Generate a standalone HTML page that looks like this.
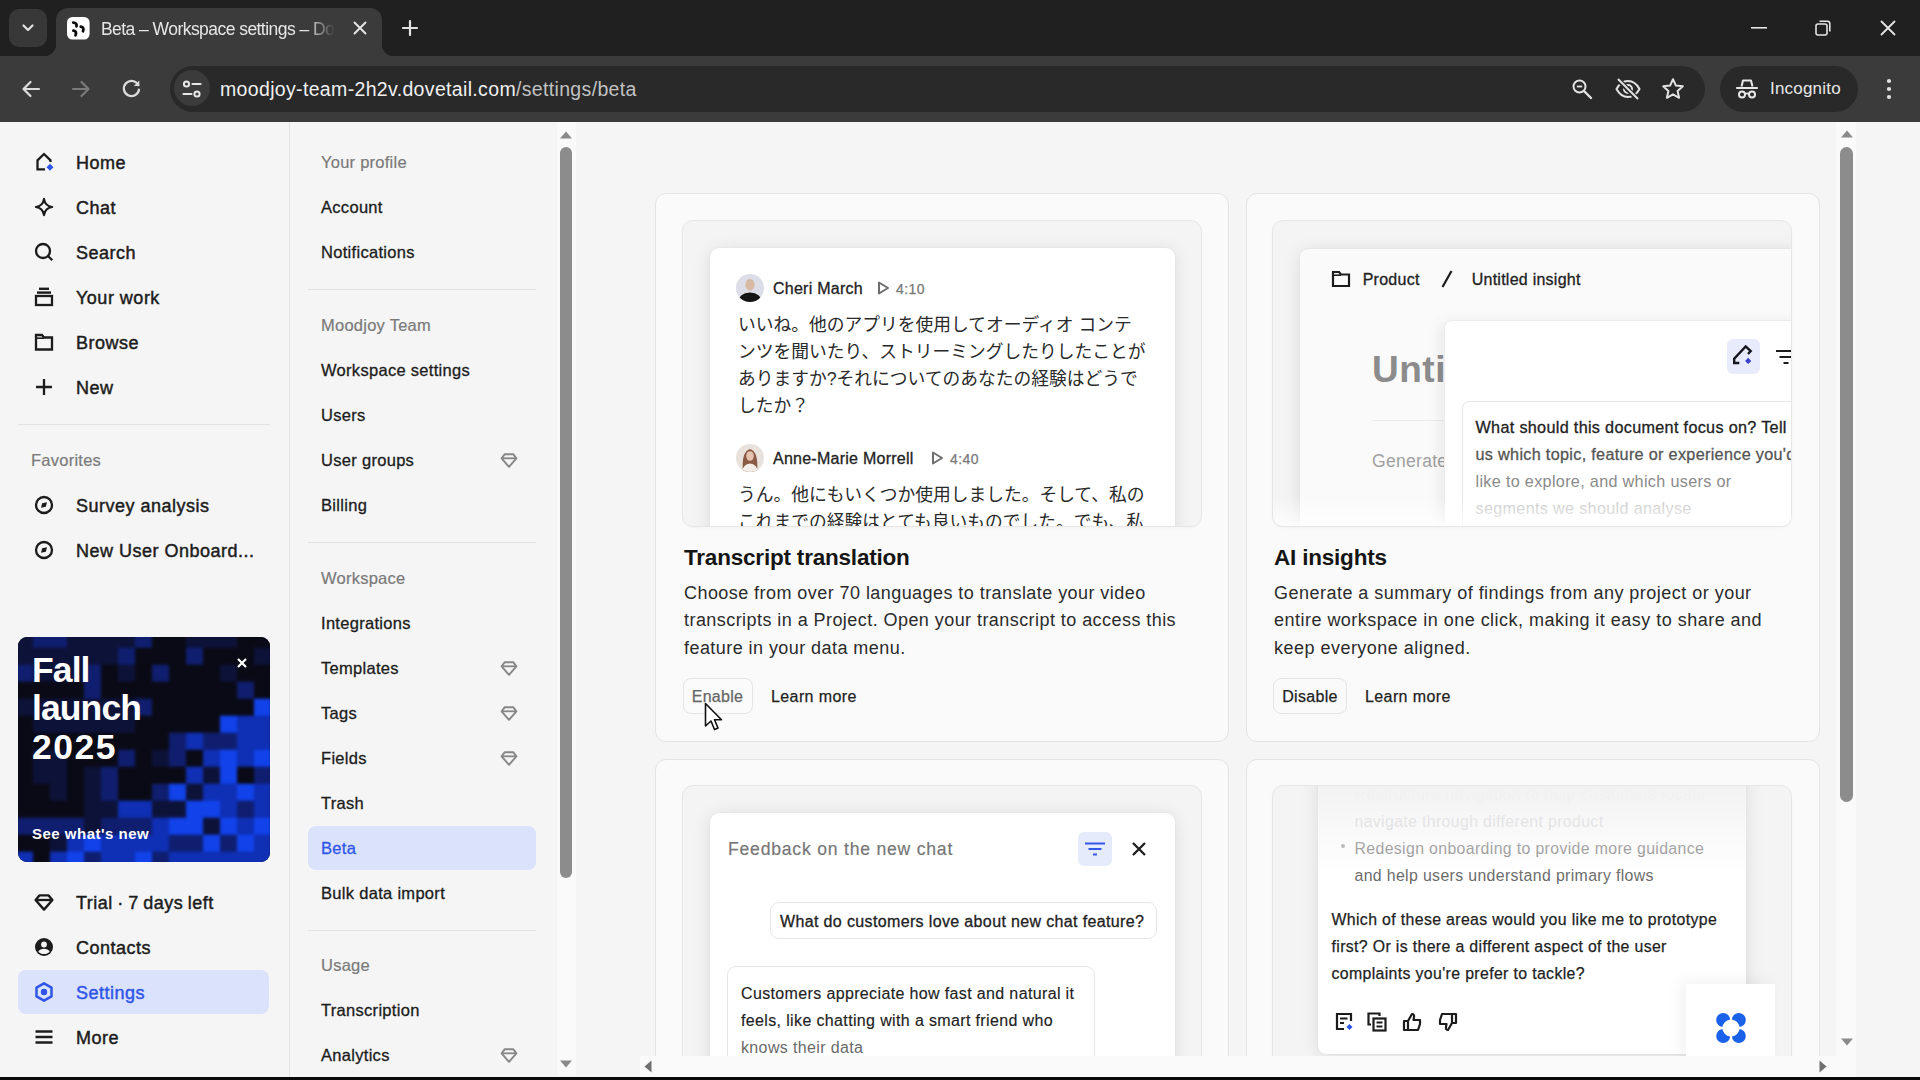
<!DOCTYPE html>
<html lang="en">
<head>
<meta charset="utf-8">
<title>Beta – Workspace settings – Dovetail</title>
<style>
*{box-sizing:border-box;margin:0;padding:0}
html,body{width:1920px;height:1080px;overflow:hidden;background:#f5f5f5}
body{font-family:"Liberation Sans","Noto Sans CJK JP",sans-serif;color:#1f1f1f;position:relative;-webkit-font-smoothing:antialiased}
.abs{position:absolute}
svg{display:block;overflow:visible}
/* ===== browser chrome ===== */
#tabstrip{position:absolute;left:0;top:0;width:1920px;height:56px;background:#202020}
#toolbar{position:absolute;left:0;top:56px;width:1920px;height:66px;background:#3b3b3b}
#tab{position:absolute;left:56px;top:8px;width:326px;height:48px;background:#3b3b3b;border-radius:12px 12px 0 0}
#tab:before,#tab:after{content:"";position:absolute;bottom:0;width:12px;height:12px}
#tab:before{left:-12px;background:radial-gradient(circle at 0 0,transparent 12px,#3b3b3b 12.5px)}
#tab:after{right:-12px;background:radial-gradient(circle at 100% 0,transparent 12px,#3b3b3b 12.5px)}
#tabsearch{position:absolute;left:9px;top:9px;width:38px;height:38px;border-radius:10px;background:#383838}
#tabtitle{position:absolute;left:101px;top:17px;width:234px;height:24px;font-size:17.5px;line-height:24px;color:#e6e6e6;white-space:nowrap;overflow:hidden;letter-spacing:-0.55px;-webkit-mask-image:linear-gradient(90deg,#000 205px,transparent 234px);mask-image:linear-gradient(90deg,#000 205px,transparent 234px)}
#omni{position:absolute;left:170px;top:65.500px;width:1535px;height:46px;border-radius:23px;background:#292929}
#sitechip{position:absolute;left:174px;top:70px;width:36px;height:36px;border-radius:18px;background:#3b3b3b}
#url{position:absolute;left:220px;top:76px;font-size:19.5px;line-height:26px;color:#f0f0f0;white-space:nowrap;letter-spacing:0.34px}
#url span{color:#c2c2c2}
#incog{position:absolute;left:1720px;top:65.500px;width:138px;height:46px;border-radius:23px;background:#292929}
#incogt{position:absolute;left:1770px;top:77px;font-size:17px;line-height:24px;color:#e8e8e8;letter-spacing:0.2px}
/* ===== page ===== */
#page{position:absolute;left:0;top:122px;width:1920px;height:955px;background:#f5f5f5;overflow:hidden}
#bottombar{position:absolute;left:0;top:1077px;width:1920px;height:3px;background:#0a0a0a}
#sb1{position:absolute;left:0;top:0;width:289.500px;height:955px;border-right:1px solid #e4e4e4}
.nav{position:absolute;left:76px;font-size:18px;line-height:24px;font-weight:400;color:#1c1c1c;white-space:nowrap;letter-spacing:0.5px;margin-top:1px;-webkit-text-stroke:0.45px #1c1c1c}
.ico{position:absolute;left:32px;width:24px;height:24px}
.sect{position:absolute;font-size:16.5px;line-height:20px;color:#7a7a7a;white-space:nowrap;letter-spacing:0.25px;-webkit-text-stroke:0.2px #7a7a7a}
.hr{position:absolute;height:1px;background:#e2e2e2}
.sel{position:absolute;background:#dbe2fb;border-radius:8px}
.n2{position:absolute;left:321px;font-size:16.5px;line-height:20px;letter-spacing:0.3px;color:#1c1c1c;white-space:nowrap;-webkit-text-stroke:0.3px #1c1c1c}
.gem{position:absolute;left:500px;width:18px;height:18px}

.card{position:absolute;width:574px;border:1px solid #e4e4e4;border-radius:11px;background:#fafafa;overflow:hidden}
.frame{position:absolute;width:520px;border:1px solid #e6e6e6;border-radius:11px;background:#f4f4f4;overflow:hidden;box-shadow:0 1px 2px rgba(0,0,0,.03)}
.panel{position:absolute;background:#fff;border-radius:9px 9px 0 0;box-shadow:0 2px 18px rgba(0,0,0,.10),0 0 2px rgba(0,0,0,.06)}
.who{position:absolute;font-size:16px;line-height:22px;color:#222;white-space:nowrap;letter-spacing:0.25px;-webkit-text-stroke:0.3px #222}
.ts{position:absolute;font-size:14px;line-height:22px;color:#777;white-space:nowrap;letter-spacing:0.4px;-webkit-text-stroke:0.25px #777}
.jp{position:absolute;font-size:17.750px;line-height:27px;color:#2a2a2a;white-space:nowrap}
.ttl{position:absolute;font-size:22.500px;line-height:28px;font-weight:700;color:#151515;white-space:nowrap;letter-spacing:-0.2px}
.desc{position:absolute;font-size:18px;line-height:27.300px;color:#2b2b2b;white-space:nowrap;letter-spacing:0.44px}
.btn{position:absolute;height:36px;border:1px solid #e4e4e4;border-radius:8px;background:#fafafa;font-size:16px;line-height:36px;text-align:center;color:#222;letter-spacing:0.3px;-webkit-text-stroke:0.25px currentColor}
.lnk{position:absolute;font-size:16px;line-height:22px;color:#222;white-space:nowrap;letter-spacing:0.4px;-webkit-text-stroke:0.25px #222}
.msg{font-size:16px;line-height:27px;color:#222;white-space:nowrap;letter-spacing:0.36px;-webkit-text-stroke:0.3px #222}
.c4{font-size:15.850px}
</style>
</head>
<body>
<!-- ================= BROWSER CHROME ================= -->
<div id="tabstrip">
  <div id="tabsearch"><svg class="abs" style="left:12px;top:14px" width="14" height="10" viewBox="0 0 14 10"><path d="M2.5 2.5 L7 7 L11.5 2.5" fill="none" stroke="#e3e3e3" stroke-width="2.2" stroke-linecap="round" stroke-linejoin="round"/></svg></div>
  <div id="tab"></div>
  <!-- favicon -->
  <svg class="abs" style="left:67px;top:16.500px" width="23" height="23" viewBox="0 0 23 23"><rect width="22.600" height="22.600" rx="5.500" fill="#fff"/><g fill="none" stroke="#0a0a0a" stroke-width="2.800" stroke-linecap="round"><path d="M6.300 5.600 Q10.200 5.800 9.500 9.300"/><path d="M13.800 9.700 Q17.400 10.400 16 14.300"/><path d="M6.400 13.700 Q10.200 14.400 8.500 18.200"/></g></svg>
  <div id="tabtitle">Beta – Workspace settings – Dovetail</div>
  <svg class="abs" style="left:353px;top:21px" width="14" height="14" viewBox="0 0 14 14"><path d="M1.5 1.5 L12.5 12.5 M12.5 1.5 L1.5 12.5" stroke="#e3e3e3" stroke-width="2" stroke-linecap="round"/></svg>
  <svg class="abs" style="left:402px;top:20px" width="16" height="16" viewBox="0 0 16 16"><path d="M8 1 V15 M1 8 H15" stroke="#e3e3e3" stroke-width="2.2" stroke-linecap="round"/></svg>
  <!-- window controls -->
  <svg class="abs" style="left:1751px;top:27px" width="16" height="2" viewBox="0 0 16 2"><rect width="16" height="1.6" fill="#e3e3e3"/></svg>
  <svg class="abs" style="left:1815px;top:20px" width="16" height="16" viewBox="0 0 16 16"><rect x="1" y="4" width="11" height="11" rx="2" fill="none" stroke="#e3e3e3" stroke-width="1.6"/><path d="M4.5 1.2 H12.5 A2.3 2.3 0 0 1 14.8 3.5 V11.5" fill="none" stroke="#e3e3e3" stroke-width="1.6"/></svg>
  <svg class="abs" style="left:1880px;top:20px" width="16" height="16" viewBox="0 0 16 16"><path d="M1.5 1.5 L14.5 14.5 M14.5 1.5 L1.5 14.5" stroke="#e3e3e3" stroke-width="1.8" stroke-linecap="round"/></svg>
</div>
<div id="toolbar"></div>
<!-- nav buttons -->
<svg class="abs" style="left:21px;top:79px" width="20" height="20" viewBox="0 0 20 20"><path d="M18 10 H3 M9.5 3 L2.5 10 L9.5 17" fill="none" stroke="#dcdcdc" stroke-width="2.2" stroke-linecap="round" stroke-linejoin="round"/></svg>
<svg class="abs" style="left:71px;top:79px" width="20" height="20" viewBox="0 0 20 20"><path d="M2 10 H17 M10.5 3 L17.5 10 L10.5 17" fill="none" stroke="#7a7a7a" stroke-width="2.2" stroke-linecap="round" stroke-linejoin="round"/></svg>
<svg class="abs" style="left:121px;top:78px" width="21" height="21" viewBox="0 0 21 21"><path d="M17.3 7.2 A7.6 7.6 0 1 0 18 11.5" fill="none" stroke="#dcdcdc" stroke-width="2.2" stroke-linecap="round"/><path d="M18.3 2.5 V8 H12.8 Z" fill="#dcdcdc"/></svg>
<div id="omni"></div>
<div id="sitechip"></div>
<svg class="abs" style="left:182px;top:80px" width="20" height="18" viewBox="0 0 20 18"><circle cx="4.5" cy="4" r="2.6" fill="none" stroke="#e8e8e8" stroke-width="2"/><path d="M10.5 4 H18.5" stroke="#e8e8e8" stroke-width="2.2" stroke-linecap="round"/><circle cx="15" cy="14" r="2.6" fill="none" stroke="#e8e8e8" stroke-width="2"/><path d="M1.5 14 H9.5" stroke="#e8e8e8" stroke-width="2.2" stroke-linecap="round"/></svg>
<div id="url">moodjoy-team-2h2v.dovetail.com<span>/settings/beta</span></div>
<!-- omnibox right icons -->
<svg class="abs" style="left:1571px;top:78px" width="22" height="22" viewBox="0 0 22 22"><circle cx="8.5" cy="8.5" r="6" fill="none" stroke="#e3e3e3" stroke-width="2"/><path d="M13 13 L20 20" stroke="#e3e3e3" stroke-width="2.4" stroke-linecap="round"/><path d="M5.8 8.5 H11.2" stroke="#e3e3e3" stroke-width="1.8"/></svg>
<svg class="abs" style="left:1615px;top:78px" width="26" height="22" viewBox="0 0 26 22"><path d="M1.5 11 C5 4.5 9 3 13 3 C17 3 21 4.5 24.5 11 C21 17.5 17 19 13 19 C9 19 5 17.5 1.5 11 Z" fill="none" stroke="#e3e3e3" stroke-width="2"/><circle cx="13" cy="11" r="4" fill="none" stroke="#e3e3e3" stroke-width="2"/><path d="M3 1.5 L22 20.5" stroke="#292929" stroke-width="5"/><path d="M3.5 1.5 L22.5 20.5" stroke="#e3e3e3" stroke-width="2" stroke-linecap="round"/></svg>
<svg class="abs" style="left:1661px;top:77px" width="24" height="23" viewBox="0 0 24 23"><path d="M12 2.2 L14.9 8.6 L21.8 9.3 L16.6 14 L18.1 20.8 L12 17.3 L5.9 20.8 L7.4 14 L2.2 9.3 L9.1 8.6 Z" fill="none" stroke="#e3e3e3" stroke-width="2" stroke-linejoin="round"/></svg>
<div id="incog"></div>
<svg class="abs" style="left:1736px;top:78px" width="22" height="22" viewBox="0 0 22 22"><path d="M5.5 8.5 L7 2.5 H15 L16.5 8.5" fill="none" stroke="#e8e8e8" stroke-width="2" stroke-linejoin="round"/><path d="M1 10 H21" stroke="#e8e8e8" stroke-width="2.2" stroke-linecap="round"/><circle cx="6" cy="16.5" r="3" fill="none" stroke="#e8e8e8" stroke-width="2"/><circle cx="16" cy="16.5" r="3" fill="none" stroke="#e8e8e8" stroke-width="2"/><path d="M9 16 Q11 14.6 13 16" fill="none" stroke="#e8e8e8" stroke-width="1.8"/></svg>
<div id="incogt">Incognito</div>
<svg class="abs" style="left:1886px;top:78px" width="6" height="22" viewBox="0 0 6 22"><circle cx="3" cy="3" r="2.1" fill="#e3e3e3"/><circle cx="3" cy="11" r="2.1" fill="#e3e3e3"/><circle cx="3" cy="19" r="2.1" fill="#e3e3e3"/></svg>

<!-- ================= PAGE ================= -->
<div id="page">
<div id="sb1">
  <!-- Home -->
  <svg class="abs" style="left:34px;top:30px" width="20" height="20" viewBox="0 0 20 20"><path d="M16.5 10 V8.3 L10 2 L3.5 8.3 V17.3 H11" fill="none" stroke="#1c1c1c" stroke-width="2.3" stroke-linejoin="miter"/><path d="M16 11.700 L19.500 15.200 L16 18.700 L12.500 15.200 Z" fill="#2f55e8"/></svg>
  <div class="nav" style="top:28px">Home</div>
  <!-- Chat -->
  <svg class="abs" style="left:34px;top:75px" width="20" height="20" viewBox="0 0 22 22"><path d="M11 2 C11.8 7.5 14.5 10.2 20 11 C14.5 11.8 11.8 14.5 11 20 C10.2 14.5 7.5 11.800 2 11 C7.5 10.2 10.2 7.5 11 2 Z" fill="none" stroke="#1c1c1c" stroke-width="2.3" stroke-linejoin="round"/></svg>
  <div class="nav" style="top:73px">Chat</div>
  <!-- Search -->
  <svg class="abs" style="left:34px;top:120px" width="20" height="20" viewBox="0 0 20 20"><circle cx="9" cy="9" r="7" fill="none" stroke="#1c1c1c" stroke-width="2.3"/><path d="M14 14 L18.3 18.3" stroke="#1c1c1c" stroke-width="2.3" stroke-linecap="butt"/></svg>
  <div class="nav" style="top:118px">Search</div>
  <!-- Your work -->
  <svg class="abs" style="left:34px;top:165px" width="20" height="20" viewBox="0 0 20 20"><rect x="2" y="9" width="16" height="9" fill="none" stroke="#1c1c1c" stroke-width="2.3"/><rect x="3" y="4.400" width="14" height="2.400" fill="#1c1c1c"/><rect x="5" y="0.600" width="10" height="2.400" fill="#1c1c1c"/></svg>
  <div class="nav" style="top:163px">Your work</div>
  <!-- Browse -->
  <svg class="abs" style="left:34px;top:210px" width="20" height="20" viewBox="0 0 20 20"><path d="M2 3 H8 L10 5.5 H18 V17.500 H2 Z" fill="none" stroke="#1c1c1c" stroke-width="2.3" stroke-linejoin="miter"/><path d="M2 6.2 H10" stroke="#1c1c1c" stroke-width="1.6"/></svg>
  <div class="nav" style="top:208px">Browse</div>
  <!-- New -->
  <svg class="abs" style="left:34px;top:255px" width="20" height="20" viewBox="0 0 20 20"><path d="M10 2 V18 M2 10 H18" stroke="#1c1c1c" stroke-width="2.3"/></svg>
  <div class="nav" style="top:253px">New</div>

  <div class="hr" style="left:18px;top:302px;width:252px"></div>
  <div class="sect" style="left:31px;top:328px">Favorites</div>
  <!-- favorites -->
  <svg class="abs" style="left:34px;top:373px" width="20" height="20" viewBox="0 0 20 20"><circle cx="10" cy="10" r="8" fill="none" stroke="#1c1c1c" stroke-width="2.300"/><path d="M7 12.700 L8.200 8.200 L13 7.300 L11.800 11.800 Z" fill="#1c1c1c"/></svg>
  <div class="nav" style="top:371px">Survey analysis</div>
  <svg class="abs" style="left:34px;top:418px" width="20" height="20" viewBox="0 0 20 20"><circle cx="10" cy="10" r="8" fill="none" stroke="#1c1c1c" stroke-width="2.300"/><path d="M7 12.700 L8.200 8.200 L13 7.300 L11.800 11.800 Z" fill="#1c1c1c"/></svg>
  <div class="nav" style="top:416px">New User Onboard...</div>

  <div class="abs" style="left:18px;top:515px;width:252px;height:225px;border-radius:9px;overflow:hidden;background:#0a0a16">
<svg class="abs" style="left:0;top:0;filter:blur(1.6px)" width="252" height="225" viewBox="0 0 252 225"><rect x="-2" y="-6.3" width="17.3" height="17.3" fill="#0d1238"/><rect x="15" y="-6.3" width="17.3" height="17.3" fill="#0f1e6e"/><rect x="32" y="-6.3" width="17.3" height="17.3" fill="#0f1e6e"/><rect x="49" y="-6.3" width="17.3" height="17.3" fill="#0d1238"/><rect x="66" y="-6.3" width="17.3" height="17.3" fill="#0d1238"/><rect x="83" y="-6.3" width="17.3" height="17.3" fill="#0d1238"/><rect x="100" y="-6.3" width="17.3" height="17.3" fill="#0d1238"/><rect x="117" y="-6.3" width="17.3" height="17.3" fill="#0f1e6e"/><rect x="134" y="-6.3" width="17.3" height="17.3" fill="#0a0a16"/><rect x="151" y="-6.3" width="17.3" height="17.3" fill="#0a0a16"/><rect x="168" y="-6.3" width="17.3" height="17.3" fill="#0d1238"/><rect x="185" y="-6.3" width="17.3" height="17.3" fill="#0d1238"/><rect x="202" y="-6.3" width="17.3" height="17.3" fill="#0d1238"/><rect x="219" y="-6.3" width="17.3" height="17.3" fill="#0a0a16"/><rect x="236" y="-6.3" width="17.3" height="17.3" fill="#0a0a16"/><rect x="-2" y="10.7" width="17.3" height="17.3" fill="#0d1238"/><rect x="15" y="10.7" width="17.3" height="17.3" fill="#0d1238"/><rect x="32" y="10.7" width="17.3" height="17.3" fill="#0d1238"/><rect x="49" y="10.7" width="17.3" height="17.3" fill="#0d1238"/><rect x="66" y="10.7" width="17.3" height="17.3" fill="#0d1238"/><rect x="83" y="10.7" width="17.3" height="17.3" fill="#0d1238"/><rect x="100" y="10.7" width="17.3" height="17.3" fill="#0f1e6e"/><rect x="117" y="10.7" width="17.3" height="17.3" fill="#0a0a16"/><rect x="134" y="10.7" width="17.3" height="17.3" fill="#0a0a16"/><rect x="151" y="10.7" width="17.3" height="17.3" fill="#0a0a16"/><rect x="168" y="10.7" width="17.3" height="17.3" fill="#0f1e6e"/><rect x="185" y="10.7" width="17.3" height="17.3" fill="#0a0a16"/><rect x="202" y="10.7" width="17.3" height="17.3" fill="#0a0a16"/><rect x="219" y="10.7" width="17.3" height="17.3" fill="#0a0a16"/><rect x="236" y="10.7" width="17.3" height="17.3" fill="#0d1238"/><rect x="-2" y="27.7" width="17.3" height="17.3" fill="#0f1e6e"/><rect x="15" y="27.7" width="17.3" height="17.3" fill="#0d1238"/><rect x="32" y="27.7" width="17.3" height="17.3" fill="#0d1238"/><rect x="49" y="27.7" width="17.3" height="17.3" fill="#0d1238"/><rect x="66" y="27.7" width="17.3" height="17.3" fill="#0f1e6e"/><rect x="83" y="27.7" width="17.3" height="17.3" fill="#0a0a16"/><rect x="100" y="27.7" width="17.3" height="17.3" fill="#0d1238"/><rect x="117" y="27.7" width="17.3" height="17.3" fill="#0a0a16"/><rect x="134" y="27.7" width="17.3" height="17.3" fill="#0f1e6e"/><rect x="151" y="27.7" width="17.3" height="17.3" fill="#0a0a16"/><rect x="168" y="27.7" width="17.3" height="17.3" fill="#0a0a16"/><rect x="185" y="27.7" width="17.3" height="17.3" fill="#0a0a16"/><rect x="202" y="27.7" width="17.3" height="17.3" fill="#0d1238"/><rect x="219" y="27.7" width="17.3" height="17.3" fill="#0a0a16"/><rect x="236" y="27.7" width="17.3" height="17.3" fill="#0a0a16"/><rect x="-2" y="44.7" width="17.3" height="17.3" fill="#0a0a16"/><rect x="15" y="44.7" width="17.3" height="17.3" fill="#0a0a16"/><rect x="32" y="44.7" width="17.3" height="17.3" fill="#0a0a16"/><rect x="49" y="44.7" width="17.3" height="17.3" fill="#0a0a16"/><rect x="66" y="44.7" width="17.3" height="17.3" fill="#0f1e6e"/><rect x="83" y="44.7" width="17.3" height="17.3" fill="#0a0a16"/><rect x="100" y="44.7" width="17.3" height="17.3" fill="#0a0a16"/><rect x="117" y="44.7" width="17.3" height="17.3" fill="#0a0a16"/><rect x="134" y="44.7" width="17.3" height="17.3" fill="#0a0a16"/><rect x="151" y="44.7" width="17.3" height="17.3" fill="#0a0a16"/><rect x="168" y="44.7" width="17.3" height="17.3" fill="#0a0a16"/><rect x="185" y="44.7" width="17.3" height="17.3" fill="#0a0a16"/><rect x="202" y="44.7" width="17.3" height="17.3" fill="#0a0a16"/><rect x="219" y="44.7" width="17.3" height="17.3" fill="#0f1e6e"/><rect x="236" y="44.7" width="17.3" height="17.3" fill="#0a0a16"/><rect x="-2" y="61.7" width="17.3" height="17.3" fill="#0d1238"/><rect x="15" y="61.7" width="17.3" height="17.3" fill="#0d1238"/><rect x="32" y="61.7" width="17.3" height="17.3" fill="#0d1238"/><rect x="49" y="61.7" width="17.3" height="17.3" fill="#0d1238"/><rect x="66" y="61.7" width="17.3" height="17.3" fill="#0d1238"/><rect x="83" y="61.7" width="17.3" height="17.3" fill="#0d1238"/><rect x="100" y="61.7" width="17.3" height="17.3" fill="#0d1238"/><rect x="117" y="61.7" width="17.3" height="17.3" fill="#0f1e6e"/><rect x="134" y="61.7" width="17.3" height="17.3" fill="#0a0a16"/><rect x="151" y="61.7" width="17.3" height="17.3" fill="#0a0a16"/><rect x="168" y="61.7" width="17.3" height="17.3" fill="#0a0a16"/><rect x="185" y="61.7" width="17.3" height="17.3" fill="#0a0a16"/><rect x="202" y="61.7" width="17.3" height="17.3" fill="#0a0a16"/><rect x="219" y="61.7" width="17.3" height="17.3" fill="#0a0a16"/><rect x="236" y="61.7" width="17.3" height="17.3" fill="#1142ea"/><rect x="-2" y="78.7" width="17.3" height="17.3" fill="#0a0a16"/><rect x="15" y="78.7" width="17.3" height="17.3" fill="#0d1238"/><rect x="32" y="78.7" width="17.3" height="17.3" fill="#0d1238"/><rect x="49" y="78.7" width="17.3" height="17.3" fill="#0d1238"/><rect x="66" y="78.7" width="17.3" height="17.3" fill="#0d1238"/><rect x="83" y="78.7" width="17.3" height="17.3" fill="#0d1238"/><rect x="100" y="78.7" width="17.3" height="17.3" fill="#0d1238"/><rect x="117" y="78.7" width="17.3" height="17.3" fill="#0a0a16"/><rect x="134" y="78.7" width="17.3" height="17.3" fill="#0a0a16"/><rect x="151" y="78.7" width="17.3" height="17.3" fill="#0a0a16"/><rect x="168" y="78.7" width="17.3" height="17.3" fill="#0a0a16"/><rect x="185" y="78.7" width="17.3" height="17.3" fill="#0a0a16"/><rect x="202" y="78.7" width="17.3" height="17.3" fill="#1142ea"/><rect x="219" y="78.7" width="17.3" height="17.3" fill="#0f2fb4"/><rect x="236" y="78.7" width="17.3" height="17.3" fill="#0f2fb4"/><rect x="-2" y="95.7" width="17.3" height="17.3" fill="#0a0a16"/><rect x="15" y="95.7" width="17.3" height="17.3" fill="#0a0a16"/><rect x="32" y="95.7" width="17.3" height="17.3" fill="#0a0a16"/><rect x="49" y="95.7" width="17.3" height="17.3" fill="#0a0a16"/><rect x="66" y="95.7" width="17.3" height="17.3" fill="#0a0a16"/><rect x="83" y="95.7" width="17.3" height="17.3" fill="#0a0a16"/><rect x="100" y="95.7" width="17.3" height="17.3" fill="#0a0a16"/><rect x="117" y="95.7" width="17.3" height="17.3" fill="#0a0a16"/><rect x="134" y="95.7" width="17.3" height="17.3" fill="#0a0a16"/><rect x="151" y="95.7" width="17.3" height="17.3" fill="#0f1e6e"/><rect x="168" y="95.7" width="17.3" height="17.3" fill="#0f2fb4"/><rect x="185" y="95.7" width="17.3" height="17.3" fill="#0f1e6e"/><rect x="202" y="95.7" width="17.3" height="17.3" fill="#0f1e6e"/><rect x="219" y="95.7" width="17.3" height="17.3" fill="#0f2fb4"/><rect x="236" y="95.7" width="17.3" height="17.3" fill="#0f2fb4"/><rect x="-2" y="112.7" width="17.3" height="17.3" fill="#0a0a16"/><rect x="15" y="112.7" width="17.3" height="17.3" fill="#0d1238"/><rect x="32" y="112.7" width="17.3" height="17.3" fill="#0d1238"/><rect x="49" y="112.7" width="17.3" height="17.3" fill="#0a0a16"/><rect x="66" y="112.7" width="17.3" height="17.3" fill="#0a0a16"/><rect x="83" y="112.7" width="17.3" height="17.3" fill="#0a0a16"/><rect x="100" y="112.7" width="17.3" height="17.3" fill="#0f1e6e"/><rect x="117" y="112.7" width="17.3" height="17.3" fill="#0a0a16"/><rect x="134" y="112.7" width="17.3" height="17.3" fill="#0d1238"/><rect x="151" y="112.7" width="17.3" height="17.3" fill="#0f1e6e"/><rect x="168" y="112.7" width="17.3" height="17.3" fill="#0a0a16"/><rect x="185" y="112.7" width="17.3" height="17.3" fill="#0f2fb4"/><rect x="202" y="112.7" width="17.3" height="17.3" fill="#1142ea"/><rect x="219" y="112.7" width="17.3" height="17.3" fill="#0f2fb4"/><rect x="236" y="112.7" width="17.3" height="17.3" fill="#1142ea"/><rect x="-2" y="129.7" width="17.3" height="17.3" fill="#0a0a16"/><rect x="15" y="129.7" width="17.3" height="17.3" fill="#0d1238"/><rect x="32" y="129.7" width="17.3" height="17.3" fill="#0d1238"/><rect x="49" y="129.7" width="17.3" height="17.3" fill="#0a0a16"/><rect x="66" y="129.7" width="17.3" height="17.3" fill="#0d1238"/><rect x="83" y="129.7" width="17.3" height="17.3" fill="#0f1e6e"/><rect x="100" y="129.7" width="17.3" height="17.3" fill="#0a0a16"/><rect x="117" y="129.7" width="17.3" height="17.3" fill="#0a0a16"/><rect x="134" y="129.7" width="17.3" height="17.3" fill="#0a0a16"/><rect x="151" y="129.7" width="17.3" height="17.3" fill="#0a0a16"/><rect x="168" y="129.7" width="17.3" height="17.3" fill="#0f2fb4"/><rect x="185" y="129.7" width="17.3" height="17.3" fill="#0d1238"/><rect x="202" y="129.7" width="17.3" height="17.3" fill="#1142ea"/><rect x="219" y="129.7" width="17.3" height="17.3" fill="#0a0a16"/><rect x="236" y="129.7" width="17.3" height="17.3" fill="#0f1e6e"/><rect x="-2" y="146.7" width="17.3" height="17.3" fill="#0a0a16"/><rect x="15" y="146.7" width="17.3" height="17.3" fill="#0a0a16"/><rect x="32" y="146.7" width="17.3" height="17.3" fill="#0d1238"/><rect x="49" y="146.7" width="17.3" height="17.3" fill="#0a0a16"/><rect x="66" y="146.7" width="17.3" height="17.3" fill="#0d1238"/><rect x="83" y="146.7" width="17.3" height="17.3" fill="#0f1e6e"/><rect x="100" y="146.7" width="17.3" height="17.3" fill="#0a0a16"/><rect x="117" y="146.7" width="17.3" height="17.3" fill="#0a0a16"/><rect x="134" y="146.7" width="17.3" height="17.3" fill="#0f1e6e"/><rect x="151" y="146.7" width="17.3" height="17.3" fill="#1142ea"/><rect x="168" y="146.7" width="17.3" height="17.3" fill="#0d1238"/><rect x="185" y="146.7" width="17.3" height="17.3" fill="#0f2fb4"/><rect x="202" y="146.7" width="17.3" height="17.3" fill="#0f2fb4"/><rect x="219" y="146.7" width="17.3" height="17.3" fill="#1142ea"/><rect x="236" y="146.7" width="17.3" height="17.3" fill="#0f2fb4"/><rect x="-2" y="163.7" width="17.3" height="17.3" fill="#0a0a16"/><rect x="15" y="163.7" width="17.3" height="17.3" fill="#0a0a16"/><rect x="32" y="163.7" width="17.3" height="17.3" fill="#0a0a16"/><rect x="49" y="163.7" width="17.3" height="17.3" fill="#0a0a16"/><rect x="66" y="163.7" width="17.3" height="17.3" fill="#0d1238"/><rect x="83" y="163.7" width="17.3" height="17.3" fill="#0d1238"/><rect x="100" y="163.7" width="17.3" height="17.3" fill="#0f2fb4"/><rect x="117" y="163.7" width="17.3" height="17.3" fill="#0f2fb4"/><rect x="134" y="163.7" width="17.3" height="17.3" fill="#0d1238"/><rect x="151" y="163.7" width="17.3" height="17.3" fill="#0d1238"/><rect x="168" y="163.7" width="17.3" height="17.3" fill="#1142ea"/><rect x="185" y="163.7" width="17.3" height="17.3" fill="#1142ea"/><rect x="202" y="163.7" width="17.3" height="17.3" fill="#0f2fb4"/><rect x="219" y="163.7" width="17.3" height="17.3" fill="#0f1e6e"/><rect x="236" y="163.7" width="17.3" height="17.3" fill="#0f2fb4"/><rect x="-2" y="180.7" width="17.3" height="17.3" fill="#0f1e6e"/><rect x="15" y="180.7" width="17.3" height="17.3" fill="#0f1e6e"/><rect x="32" y="180.7" width="17.3" height="17.3" fill="#0f1e6e"/><rect x="49" y="180.7" width="17.3" height="17.3" fill="#0f1e6e"/><rect x="66" y="180.7" width="17.3" height="17.3" fill="#0d1238"/><rect x="83" y="180.7" width="17.3" height="17.3" fill="#0f1e6e"/><rect x="100" y="180.7" width="17.3" height="17.3" fill="#0f1e6e"/><rect x="117" y="180.7" width="17.3" height="17.3" fill="#0f1e6e"/><rect x="134" y="180.7" width="17.3" height="17.3" fill="#0f2fb4"/><rect x="151" y="180.7" width="17.3" height="17.3" fill="#1142ea"/><rect x="168" y="180.7" width="17.3" height="17.3" fill="#1142ea"/><rect x="185" y="180.7" width="17.3" height="17.3" fill="#0d1238"/><rect x="202" y="180.7" width="17.3" height="17.3" fill="#1142ea"/><rect x="219" y="180.7" width="17.3" height="17.3" fill="#0f2fb4"/><rect x="236" y="180.7" width="17.3" height="17.3" fill="#1142ea"/><rect x="-2" y="197.7" width="17.3" height="17.3" fill="#0a0a16"/><rect x="15" y="197.7" width="17.3" height="17.3" fill="#0a0a16"/><rect x="32" y="197.7" width="17.3" height="17.3" fill="#0d1238"/><rect x="49" y="197.7" width="17.3" height="17.3" fill="#0f2fb4"/><rect x="66" y="197.7" width="17.3" height="17.3" fill="#1142ea"/><rect x="83" y="197.7" width="17.3" height="17.3" fill="#0f2fb4"/><rect x="100" y="197.7" width="17.3" height="17.3" fill="#0f2fb4"/><rect x="117" y="197.7" width="17.3" height="17.3" fill="#0f2fb4"/><rect x="134" y="197.7" width="17.3" height="17.3" fill="#0f2fb4"/><rect x="151" y="197.7" width="17.3" height="17.3" fill="#0f1e6e"/><rect x="168" y="197.7" width="17.3" height="17.3" fill="#0f1e6e"/><rect x="185" y="197.7" width="17.3" height="17.3" fill="#1142ea"/><rect x="202" y="197.7" width="17.3" height="17.3" fill="#0f1e6e"/><rect x="219" y="197.7" width="17.3" height="17.3" fill="#1142ea"/><rect x="236" y="197.7" width="17.3" height="17.3" fill="#0f2fb4"/><rect x="-2" y="214.7" width="17.3" height="17.3" fill="#0f2fb4"/><rect x="15" y="214.7" width="17.3" height="17.3" fill="#0a0a16"/><rect x="32" y="214.7" width="17.3" height="17.3" fill="#0f2fb4"/><rect x="49" y="214.7" width="17.3" height="17.3" fill="#1142ea"/><rect x="66" y="214.7" width="17.3" height="17.3" fill="#0f1e6e"/><rect x="83" y="214.7" width="17.3" height="17.3" fill="#0f2fb4"/><rect x="100" y="214.7" width="17.3" height="17.3" fill="#0f2fb4"/><rect x="117" y="214.7" width="17.3" height="17.3" fill="#1142ea"/><rect x="134" y="214.7" width="17.3" height="17.3" fill="#0f1e6e"/><rect x="151" y="214.7" width="17.3" height="17.3" fill="#0f2fb4"/><rect x="168" y="214.7" width="17.3" height="17.3" fill="#0f2fb4"/><rect x="185" y="214.7" width="17.3" height="17.3" fill="#0f2fb4"/><rect x="202" y="214.7" width="17.3" height="17.3" fill="#0f2fb4"/><rect x="219" y="214.7" width="17.3" height="17.3" fill="#0f2fb4"/><rect x="236" y="214.7" width="17.3" height="17.3" fill="#0f2fb4"/></svg>
<div class="abs" style="left:14px;top:13.500px;font-size:35.500px;line-height:38.500px;font-weight:700;color:#fff;letter-spacing:-0.9px">Fall<br>launch<br><span style="letter-spacing:1.500px">2025</span></div>
<div class="abs" style="left:14px;top:187px;font-size:15px;line-height:20px;font-weight:700;color:#fff;letter-spacing:0.5px;white-space:nowrap">See what's new</div>
<svg class="abs" style="left:219px;top:21px" width="10" height="10" viewBox="0 0 10 10"><path d="M1 1 L9 9 M9 1 L1 9" stroke="#fff" stroke-width="2.2"/></svg>
</div>

  <!-- Trial -->
  <svg class="abs" style="left:34px;top:770px" width="20" height="20" viewBox="0 0 20 20"><path d="M5.400 3.400 H14.600 L18.400 8 L10 17.600 L1.600 8 Z" fill="none" stroke="#1c1c1c" stroke-width="2.400" stroke-linejoin="round"/><path d="M2.200 8 H17.800" stroke="#1c1c1c" stroke-width="2.300"/></svg>
  <div class="nav" style="top:768px;word-spacing:-1px">Trial · 7 days left</div>
  <!-- Contacts -->
  <svg class="abs" style="left:34px;top:815px" width="20" height="20" viewBox="0 0 20 20"><circle cx="10" cy="10" r="9" fill="#1c1c1c"/><circle cx="10" cy="7.500" r="2.900" fill="#f5f5f5"/><path d="M4.300 14.800 C5.500 12.400 7.500 11.700 10 11.700 C12.500 11.700 14.500 12.400 15.700 14.800 C14.200 16.400 12.200 17.100 10 17.100 C7.800 17.100 5.800 16.400 4.300 14.800 Z" fill="#f5f5f5"/></svg>
  <div class="nav" style="top:813px">Contacts</div>
  <!-- Settings -->
  <div class="sel" style="left:18px;top:848px;width:251px;height:44px"></div>
  <svg class="abs" style="left:34px;top:860px" width="20" height="20" viewBox="0 0 20 20"><path d="M10 1.300 L17.500 5.650 V14.350 L10 18.700 L2.500 14.350 V5.650 Z" fill="none" stroke="#2f55e8" stroke-width="2.500" stroke-linejoin="round"/><circle cx="10" cy="10" r="3.200" fill="#2f55e8"/></svg>
  <div class="nav" style="top:858px;color:#2f55e8;-webkit-text-stroke-color:#2f55e8">Settings</div>
  <!-- More -->
  <svg class="abs" style="left:34px;top:905px" width="20" height="20" viewBox="0 0 20 20"><path d="M1.500 4.500 H18.500 M1.500 10 H18.500 M1.500 15.500 H18.500" stroke="#1c1c1c" stroke-width="2.700"/></svg>
  <div class="nav" style="top:903px">More</div>
</div>

<div id="sb2">
<div class="sect" style="left:321px;top:30px">Your profile</div>
<div class="n2" style="top:75px">Account</div>
<div class="n2" style="top:120px">Notifications</div>
<div class="hr" style="left:308px;top:167px;width:228px"></div>
<div class="sect" style="left:321px;top:193px">Moodjoy Team</div>
<div class="n2" style="top:238px">Workspace settings</div>
<div class="n2" style="top:283px">Users</div>
<div class="n2" style="top:328px">User groups</div>
<svg class="gem" style="top:329px" width="18" height="18" viewBox="0 0 18 18"><path d="M4.800 3.200 H13.200 L16.400 7.300 L9 15.800 L1.600 7.300 Z" fill="none" stroke="#878787" stroke-width="1.900" stroke-linejoin="round"/><path d="M2.200 7.300 H15.800" stroke="#878787" stroke-width="1.800"/></svg>
<div class="n2" style="top:373px">Billing</div>
<div class="hr" style="left:308px;top:420px;width:228px"></div>
<div class="sect" style="left:321px;top:446px">Workspace</div>
<div class="n2" style="top:491px">Integrations</div>
<div class="n2" style="top:536px">Templates</div>
<svg class="gem" style="top:537px" width="18" height="18" viewBox="0 0 18 18"><path d="M4.800 3.200 H13.200 L16.400 7.300 L9 15.800 L1.600 7.300 Z" fill="none" stroke="#878787" stroke-width="1.900" stroke-linejoin="round"/><path d="M2.200 7.300 H15.800" stroke="#878787" stroke-width="1.800"/></svg>
<div class="n2" style="top:581px">Tags</div>
<svg class="gem" style="top:582px" width="18" height="18" viewBox="0 0 18 18"><path d="M4.800 3.200 H13.200 L16.400 7.300 L9 15.800 L1.600 7.300 Z" fill="none" stroke="#878787" stroke-width="1.900" stroke-linejoin="round"/><path d="M2.200 7.300 H15.800" stroke="#878787" stroke-width="1.800"/></svg>
<div class="n2" style="top:626px">Fields</div>
<svg class="gem" style="top:627px" width="18" height="18" viewBox="0 0 18 18"><path d="M4.800 3.200 H13.200 L16.400 7.300 L9 15.800 L1.600 7.300 Z" fill="none" stroke="#878787" stroke-width="1.900" stroke-linejoin="round"/><path d="M2.200 7.300 H15.800" stroke="#878787" stroke-width="1.800"/></svg>
<div class="n2" style="top:671px">Trash</div>
<div class="sel" style="left:308px;top:704px;width:228px;height:44px"></div>
<div class="n2" style="top:716px;color:#2f55e8;-webkit-text-stroke-color:#2f55e8">Beta</div>
<div class="n2" style="top:761px">Bulk data import</div>
<div class="hr" style="left:308px;top:808px;width:228px"></div>
<div class="sect" style="left:321px;top:833px">Usage</div>
<div class="n2" style="top:878px">Transcription</div>
<div class="n2" style="top:923px">Analytics</div>
<svg class="gem" style="top:924px" width="18" height="18" viewBox="0 0 18 18"><path d="M4.800 3.200 H13.200 L16.400 7.300 L9 15.800 L1.600 7.300 Z" fill="none" stroke="#878787" stroke-width="1.900" stroke-linejoin="round"/><path d="M2.200 7.300 H15.800" stroke="#878787" stroke-width="1.800"/></svg>
<div class="abs" style="left:557px;top:0;width:19px;height:954px;background:#fafafa"></div>
<svg class="abs" style="left:559px;top:9px" width="14" height="8" viewBox="0 0 14 8"><path d="M7 0.500 L13 7.500 H1 Z" fill="#8a8a8a"/></svg>
<div class="abs" style="left:560px;top:25px;width:12px;height:731px;border-radius:6px;background:#8c8c8c"></div>
<svg class="abs" style="left:559px;top:938px" width="14" height="8" viewBox="0 0 14 8"><path d="M7 7.500 L13 0.500 H1 Z" fill="#8a8a8a"/></svg>
</div>
<div id="main">
<!-- ============ CARD 1 ============ -->
<div class="card" style="left:655px;top:71px;height:549px">
  <div class="frame" style="left:26px;top:26px;height:307px">
    <div class="panel" style="left:27px;top:27px;width:465px;height:320px">
      <svg class="abs" style="left:26px;top:26px;border-radius:50%;overflow:hidden" width="28" height="28" viewBox="0 0 28 28"><g><rect width="28" height="28" fill="#dcdde6"/><ellipse cx="14" cy="11" rx="4.6" ry="5.4" fill="#d9b9a4"/><path d="M9.500 8 Q14 2 18.500 8 Q14 5.500 9.500 8Z" fill="#c9b9a0"/><path d="M2 28 Q3 19 14 18.500 Q25 19 26 28 Z" fill="#151515"/></g></svg>
      <div class="who" style="left:63px;top:30px">Cheri March</div>
      <svg class="abs" style="left:167px;top:33px" width="13" height="14" viewBox="0 0 13 14"><path d="M2 1.500 L11 7 L2 12.500 Z" fill="none" stroke="#6e6e6e" stroke-width="2" stroke-linejoin="round"/></svg>
      <div class="ts" style="left:186px;top:30px">4:10</div>
      <div class="jp" style="left:28px;top:64px">いいね。他のアプリを使用してオーディオ コンテ<br>ンツを聞いたり、ストリーミングしたりしたことが<br>ありますか?それについてのあなたの経験はどうで<br>したか？</div>
      <svg class="abs" style="left:26px;top:196px;border-radius:50%;overflow:hidden" width="28" height="28" viewBox="0 0 28 28"><g><rect width="28" height="28" fill="#e9e2dc"/><path d="M7 28 Q5 8 14 5 Q23 8 21 28 Z" fill="#8a5a44"/><ellipse cx="14" cy="12" rx="3.800" ry="4.800" fill="#e6c3ae"/><path d="M6 28 Q7 20 14 19.500 Q21 20 22 28 Z" fill="#f3eee9"/></g></svg>
      <div class="who" style="left:63px;top:200px">Anne-Marie Morrell</div>
      <svg class="abs" style="left:221px;top:203px" width="13" height="14" viewBox="0 0 13 14"><path d="M2 1.500 L11 7 L2 12.500 Z" fill="none" stroke="#6e6e6e" stroke-width="2" stroke-linejoin="round"/></svg>
      <div class="ts" style="left:240px;top:200px">4:40</div>
      <div class="jp" style="left:28px;top:234px">うん。他にもいくつか使用しました。そして、私の<br>これまでの経験はとても良いものでした。でも、私</div>
    </div>
  </div>
  <div class="ttl" style="left:28px;top:350px">Transcript translation</div>
  <div class="desc" style="left:28px;top:386px">Choose from over 70 languages to translate your video<br>transcripts in a Project. Open your transcript to access this<br>feature in your data menu.</div>
  <div class="btn" style="left:26.500px;top:484px;width:70px;color:#666;background:#fbfbfb">Enable</div>
  <div class="lnk" style="left:115px;top:492px">Learn more</div>
</div>
<!-- cursor -->
<svg class="abs" style="left:704px;top:580px;z-index:9" width="20" height="30" viewBox="0 0 20 30"><path d="M1.500 1.500 V24 L7 19 L10.500 27.500 L14 26 L10.500 17.800 H17.500 Z" fill="#fff" stroke="#111" stroke-width="1.600" stroke-linejoin="round"/></svg>

<!-- ============ CARD 2 ============ -->
<div class="card" style="left:1246px;top:71px;height:549px">
  <div class="frame" style="left:25px;top:26px;height:307px">
    <div class="panel" style="left:27px;top:28px;width:520px;height:320px;border-radius:8px 0 0 0;background:#fafafa">
      <svg class="abs" style="left:31px;top:21px" width="20" height="18" viewBox="0 0 20 18"><path d="M2 2 H8 L10 4.500 H18 V16 H2 Z" fill="none" stroke="#1c1c1c" stroke-width="2.200"/><path d="M2 5.200 H10" stroke="#1c1c1c" stroke-width="1.600"/></svg>
      <div class="who" style="left:62.700px;top:20px">Product</div>
      <svg class="abs" style="left:139.700px;top:21px" width="14" height="18" viewBox="0 0 14 18"><path d="M11.500 1 L2.500 17" stroke="#1c1c1c" stroke-width="2.200"/></svg>
      <div class="who" style="left:171.700px;top:20px">Untitled insight</div>
      <div class="abs" style="left:72px;top:99px;font-size:37px;line-height:44px;font-weight:700;color:#8c8c8c;letter-spacing:0.5px">Unti</div>
      <div class="abs" style="left:72px;top:171px;width:200px;height:1px;background:#ebebeb"></div>
      <div class="abs" style="left:72px;top:200px;font-size:17.500px;line-height:24px;color:#a0a0a0;letter-spacing:0.3px">Generate</div>
      <div class="abs" style="left:143.500px;top:70.500px;width:400px;height:260px;background:#fff;border:1px solid #ececec;border-radius:8px 0 0 0;box-shadow:-4px 2px 14px rgba(0,0,0,.07)">
        <div class="abs" style="left:282.500px;top:18.500px;width:33px;height:34.500px;border-radius:6px;background:#e8ebfb"></div>
        <svg class="abs" style="left:286.500px;top:22.400px" width="24" height="24" viewBox="0 0 24 24"><path d="M8.300 20 H3.200 V15.800 L14.700 3.400 L19.700 8 L17 11" fill="none" stroke="#15151f" stroke-width="2.400" stroke-linejoin="miter"/><path d="M17.200 14.800 L20.300 17.900 L17.200 21 L14.100 17.900 Z" fill="#3a3fc9"/></svg>
        <svg class="abs" style="left:331px;top:28px" width="20" height="16" viewBox="0 0 20 16"><path d="M0 2 H20 M3.500 8 H16.500 M7.500 14 H12.500" stroke="#1c1c1c" stroke-width="2.200"/></svg>
        <div class="abs" style="left:17px;top:80px;width:400px;height:200px;border:1px solid #e6e6e6;border-radius:7px 0 0 0;background:#fff"></div>
        <div class="abs" style="left:31px;top:93px;font-size:16.200px;line-height:27px;white-space:nowrap;letter-spacing:0.32px;color:#222;-webkit-text-stroke:0.3px #222">What should this document focus on? Tell<br><span style="color:#555;-webkit-text-stroke-color:#555">us which topic, feature or experience you'd</span><br><span style="color:#8a8a8a;-webkit-text-stroke:0">like to explore, and which users or</span><br><span style="color:#c4c4c4;-webkit-text-stroke:0">segments we should analyse</span></div>
      </div>
    </div>
    <div class="abs" style="left:0;top:276px;width:518px;height:30px;background:linear-gradient(180deg,rgba(255,255,255,0),rgba(255,255,255,.85))"></div>
  </div>
  <div class="ttl" style="left:27px;top:350px">AI insights</div>
  <div class="desc" style="left:27px;top:386px;letter-spacing:0.48px">Generate a summary of findings from any project or your<br>entire workspace in one click, making it easy to share and<br>keep everyone aligned.</div>
  <div class="btn" style="left:26px;top:484px;width:74px">Disable</div>
  <div class="lnk" style="left:118px;top:492px">Learn more</div>
</div>

<!-- ============ CARD 3 ============ -->
<div class="card" style="left:655px;top:637px;height:400px">
  <div class="frame" style="left:26px;top:24.500px;height:330px">
    <div class="panel" style="left:27px;top:27px;width:465px;height:320px">
      <div class="abs" style="left:18px;top:24px;font-size:17.600px;line-height:24px;color:#777;letter-spacing:0.78px;white-space:nowrap;-webkit-text-stroke:0.2px #777">Feedback on the new chat</div>
      <div class="abs" style="left:368px;top:19px;width:34px;height:34px;border-radius:6px;background:#e6ebfb"></div>
      <svg class="abs" style="left:375px;top:29px" width="20" height="14" viewBox="0 0 20 14"><path d="M0 1.500 H20 M3.500 7 H16.500 M8 12.500 H12" stroke="#3558e6" stroke-width="2.200"/></svg>
      <svg class="abs" style="left:422px;top:29px" width="14" height="14" viewBox="0 0 14 14"><path d="M1 1 L13 13 M13 1 L1 13" stroke="#1c1c1c" stroke-width="2.300"/></svg>
      <div class="abs" style="left:60px;top:89.500px;width:387px;height:37px;border:1px solid #e6e6e6;border-radius:9px;background:#fff"></div>
      <div class="abs msg" style="left:70px;top:95px">What do customers love about new chat feature?</div>
      <div class="abs" style="left:17px;top:153px;width:368px;height:200px;border:1px solid #e6e6e6;border-radius:9px;background:#fff"></div>
      <div class="abs msg" style="left:31px;top:167px;-webkit-text-stroke:0.15px #222">Customers appreciate how fast and natural it<br>feels, like chatting with a smart friend who<br><span style="color:#6a6a6a;-webkit-text-stroke:0">knows their data</span></div>
    </div>
  </div>
</div>

<!-- ============ CARD 4 ============ -->
<div class="card" style="left:1246px;top:637px;height:400px">
  <div class="frame" style="left:25px;top:24.500px;height:330px">
    <div class="panel" style="left:45px;top:-20px;width:428px;height:288px;border-radius:8px">
      <div class="abs msg c4" style="left:36.500px;top:15px;color:#e0e0e0;-webkit-text-stroke:0">Restructure navigation to help customers locate</div>
      <div class="abs msg c4" style="left:36.500px;top:42px;color:#c6c6c6;-webkit-text-stroke:0">navigate through different product</div>
      <div class="abs" style="left:22.500px;top:78.500px;width:4px;height:4px;border-radius:2px;background:#9a9a9a"></div>
      <div class="abs msg c4" style="left:36.500px;top:69px;color:#7c7c7c;-webkit-text-stroke:0">Redesign onboarding to provide more guidance<br><span style="color:#6a6a6a">and help users understand primary flows</span></div>
      <div class="abs msg c4" style="left:13.500px;top:140px;-webkit-text-stroke:0.25px #222">Which of these areas would you like me to prototype<br>first? Or is there a different aspect of the user<br>complaints you're prefer to tackle?</div>
      <!-- action icons -->
      <svg class="abs" style="left:17px;top:246.500px" width="20" height="20" viewBox="0 0 20 20"><path d="M16 9 V2 H2 V17 H9" fill="none" stroke="#1c1c1c" stroke-width="2.200"/><path d="M5 6.500 H12.500 M5 11 H9" stroke="#1c1c1c" stroke-width="2"/><path d="M14.500 12 L17.500 15 L14.500 18 L11.500 15 Z" fill="#2f55e8"/></svg>
      <svg class="abs" style="left:49px;top:246.500px" width="20" height="20" viewBox="0 0 20 20"><path d="M12.500 4 V1.500 H1.500 V12.500 H4" fill="none" stroke="#1c1c1c" stroke-width="2.200"/><rect x="6.500" y="6.500" width="12" height="12" fill="none" stroke="#1c1c1c" stroke-width="2.200"/><path d="M9.500 10.500 H15.500 M9.500 14.500 H15.500" stroke="#1c1c1c" stroke-width="1.800"/></svg>
      <svg class="abs" style="left:84px;top:246.500px" width="20" height="20" viewBox="0 0 20 20"><path d="M6 18 H2 V9 H6 Z M6 9 L10 2 Q12.500 2 12 5 L11.500 8 H18 V12 L16 18 H6" fill="none" stroke="#1c1c1c" stroke-width="2.200" stroke-linejoin="round"/></svg>
      <svg class="abs" style="left:120px;top:246.500px" width="20" height="20" viewBox="0 0 20 20"><path d="M14 2 H18 V11 H14 Z M14 11 L10 18 Q7.500 18 8 15 L8.500 12 H2 V8 L4 2 H14" fill="none" stroke="#1c1c1c" stroke-width="2.200" stroke-linejoin="round"/></svg>
      <div class="abs" style="left:0;top:0;width:428px;height:110px;border-radius:8px 8px 0 0;background:linear-gradient(180deg,#f2f2f3 20%,rgba(244,244,245,.6) 55%,rgba(255,255,255,0) 100%)"></div>
    </div>
    <div class="abs" style="left:413px;top:198px;width:89px;height:80px;background:#fff;box-shadow:-6px -4px 14px rgba(0,0,0,.05)"></div>
    <svg class="abs" style="left:442px;top:226.600px" width="32" height="32" viewBox="-16 -16 32 32"><g fill="#1a62ea"><circle cx="-7.800" cy="-8" r="7"/><circle cx="7.800" cy="-8" r="7"/><circle cx="-7.800" cy="8" r="7"/><circle cx="7.800" cy="8" r="7"/></g><g fill="#fff"><circle cx="0" cy="0" r="8.600"/><rect x="-1.100" y="-16" width="2.200" height="32"/><rect x="-16" y="-1.100" width="32" height="2.200"/></g></svg>
  </div>
</div>

<!-- horizontal scrollbar -->
<div class="abs" style="left:640px;top:934px;width:1216px;height:21px;background:#fafafa"></div>
<svg class="abs" style="left:644px;top:938px" width="8" height="13" viewBox="0 0 8 13"><path d="M0.500 6.500 L7.500 0.500 V12.500 Z" fill="#6f6f6f"/></svg>
<svg class="abs" style="left:1819px;top:938px" width="8" height="13" viewBox="0 0 8 13"><path d="M7.500 6.500 L0.500 0.500 V12.500 Z" fill="#6f6f6f"/></svg>
<!-- vertical scrollbar -->
<div class="abs" style="left:1836px;top:0;width:20px;height:934px;background:#fafafa"></div>
<svg class="abs" style="left:1840px;top:8px" width="14" height="8" viewBox="0 0 14 8"><path d="M7 0.500 L13 7.500 H1 Z" fill="#8a8a8a"/></svg>
<div class="abs" style="left:1840px;top:25px;width:13px;height:655px;border-radius:6.500px;background:#8c8c8c"></div>
<svg class="abs" style="left:1840px;top:916px" width="14" height="8" viewBox="0 0 14 8"><path d="M7 7.500 L13 0.500 H1 Z" fill="#8a8a8a"/></svg>
</div>

</div>
<div id="bottombar"></div>
</body>
</html>
